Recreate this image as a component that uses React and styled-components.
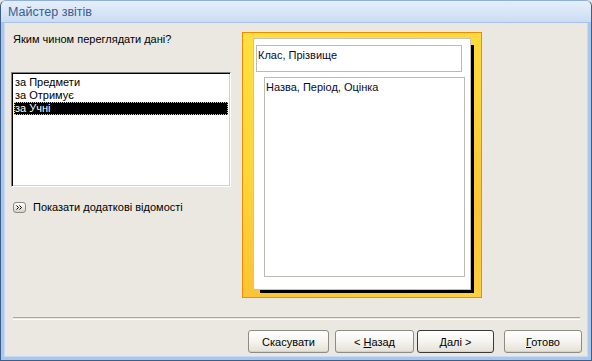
import React from "react";
import styled, { createGlobalStyle } from "styled-components";

const Global = createGlobalStyle`
  html, body { margin: 0; padding: 0; background: #ebe8e1; }
  body { font-family: "Liberation Sans", Arial, sans-serif; }
`;

const Window = styled.div`
  width: 592px;
  height: 361px;
  box-sizing: border-box;
  display: flex;
  flex-direction: column;
  background: #a9c6ec;
  border: 1px solid #3d5d8a;
  border-top-color: #8fb0dc;
  border-radius: 6px 6px 0 0;
  overflow: hidden;
`;

const TitleBar = styled.div`
  height: 21px;
  flex: none;
  display: flex;
  align-items: center;
  padding-left: 7px;
  background: linear-gradient(#e6effb, #d9e6f7 50%, #cadcf3);
  border-bottom: 1px solid #a7c2e6;
  color: #3a5d92;
  font-size: 12.5px;
`;

const Body = styled.div`
  flex: 1;
  margin: 0 3px 3px 3px;
  background: #ebe8e1;
  border: 1px solid #c9d9ef;
  border-top: none;
  display: flex;
  flex-direction: column;
  padding: 9px 0 0 6px;
  font-size: 11px;
  color: #000;
`;

const Main = styled.div`
  display: flex;
  gap: 11px;
  height: 266px;
`;

const LeftPane = styled.div`
  width: 220px;
  display: flex;
  flex-direction: column;
`;

const Question = styled.div`
  padding-left: 2px;
  line-height: 14px;
  margin-bottom: 26px;
`;

const ListBox = styled.div`
  height: 115px;
  box-sizing: border-box;
  background: #fff;
  border: 1px solid;
  border-color: #808080 #fff #fff #808080;
  box-shadow: inset 1px 1px 0 #000, inset -1px -1px 0 #d4d0c8;
  padding: 3px 2px 0 2px;
  display: flex;
  flex-direction: column;
`;

const ListItem = styled.div`
  height: 13px;
  line-height: 13px;
  padding-left: 1px;
  box-sizing: border-box;
  white-space: nowrap;
  background: ${(p) => (p.$selected ? "#000" : "transparent")};
  color: ${(p) => (p.$selected ? "#fff" : "#000")};
  outline: ${(p) => (p.$selected ? "1px dotted #e0d070" : "none")};
  outline-offset: -1px;
`;

const MoreRow = styled.div`
  display: flex;
  align-items: center;
  gap: 7px;
  margin-top: 14px;
  padding-left: 2px;
`;

const MoreIcon = styled.span`
  width: 11px;
  height: 9px;
  border: 1px solid #8a8a80;
  border-radius: 3px;
  background: linear-gradient(#ffffff, #d6d2c8);
  display: flex;
  align-items: center;
  justify-content: center;
`;

const Preview = styled.div`
  width: 240px;
  height: 266px;
  box-sizing: border-box;
  border: 1px solid #f08a00;
  background: linear-gradient(160deg, #ffe040 0%, #fdd63a 40%, #fbc436 75%, #fcd040 100%);
  padding: 5px 0 0 10px;
`;

const Page = styled.div`
  width: 218px;
  height: 252px;
  box-sizing: border-box;
  background: #fff;
  border: 1px solid #c6c3bc;
  box-shadow: 5px 5px 0 -2px #000;
  padding: 6px 0 0 2px;
  display: flex;
  flex-direction: column;
`;

const Group = styled.div`
  box-sizing: border-box;
  border: 1px solid #bcb9b2;
  margin-left: ${(p) => p.$indent || 0}px;
  margin-top: ${(p) => p.$top || 0}px;
  width: ${(p) => p.$w}px;
  height: ${(p) => p.$h}px;
  padding: 2px 0 0 1px;
  line-height: 14px;
  color: #0a0a30;
`;

const Separator = styled.div`
  margin: 19px 7px 0 2px;
  height: 1px;
  border-top: 1px solid #aca899;
  border-bottom: 1px solid #fff;
`;

const ButtonRow = styled.div`
  display: flex;
  margin-top: 10px;
  padding-left: 237px;
`;

const Button = styled.button`
  width: ${(p) => p.$w}px;
  height: 23px;
  margin-left: ${(p) => p.$gap || 0}px;
  box-sizing: border-box;
  border: 1px solid ${(p) => (p.$default ? "#3a3a3a" : "#8c8c86")};
  border-radius: 3px;
  background: linear-gradient(#ffffff, #f5f4f0 50%, #e3e0d6);
  box-shadow: inset 0 -1px 0 #d6d2c5;
  font-family: "Liberation Sans", Arial, sans-serif;
  font-size: 11px;
  color: #000;
  padding: 0;
  u { text-decoration: underline; }
`;

export default function App() {
  return (
    <>
      <Global />
      <Window>
        <TitleBar>Майстер звітів</TitleBar>
        <Body>
          <Main>
            <LeftPane>
              <Question>Яким чином переглядати дані?</Question>
              <ListBox>
                <ListItem>за Предмети</ListItem>
                <ListItem>за Отримує</ListItem>
                <ListItem $selected>за Учні</ListItem>
              </ListBox>
              <MoreRow>
                <MoreIcon>
                  <svg width="7" height="5" viewBox="0 0 7 5">
                    <path d="M0.5 0.5 L2.5 2.5 L0.5 4.5 M3.5 0.5 L5.5 2.5 L3.5 4.5" fill="none" stroke="#000" strokeWidth="1" />
                  </svg>
                </MoreIcon>
                <span>Показати додаткові відомості</span>
              </MoreRow>
            </LeftPane>
            <Preview>
              <Page>
                <Group $w={206} $h={27}>Клас, Прізвище</Group>
                <Group $indent={8} $top={5} $w={201} $h={200}>Назва, Період, Оцінка</Group>
              </Page>
            </Preview>
          </Main>
          <Separator />
          <ButtonRow>
            <Button $w={81}>Скасувати</Button>
            <Button $w={79} $gap={6}>&lt; <u>Н</u>азад</Button>
            <Button $w={77} $gap={3} $default><u>Д</u>алі &gt;</Button>
            <Button $w={78} $gap={10}><u>Г</u>отово</Button>
          </ButtonRow>
        </Body>
      </Window>
    </>
  );
}
